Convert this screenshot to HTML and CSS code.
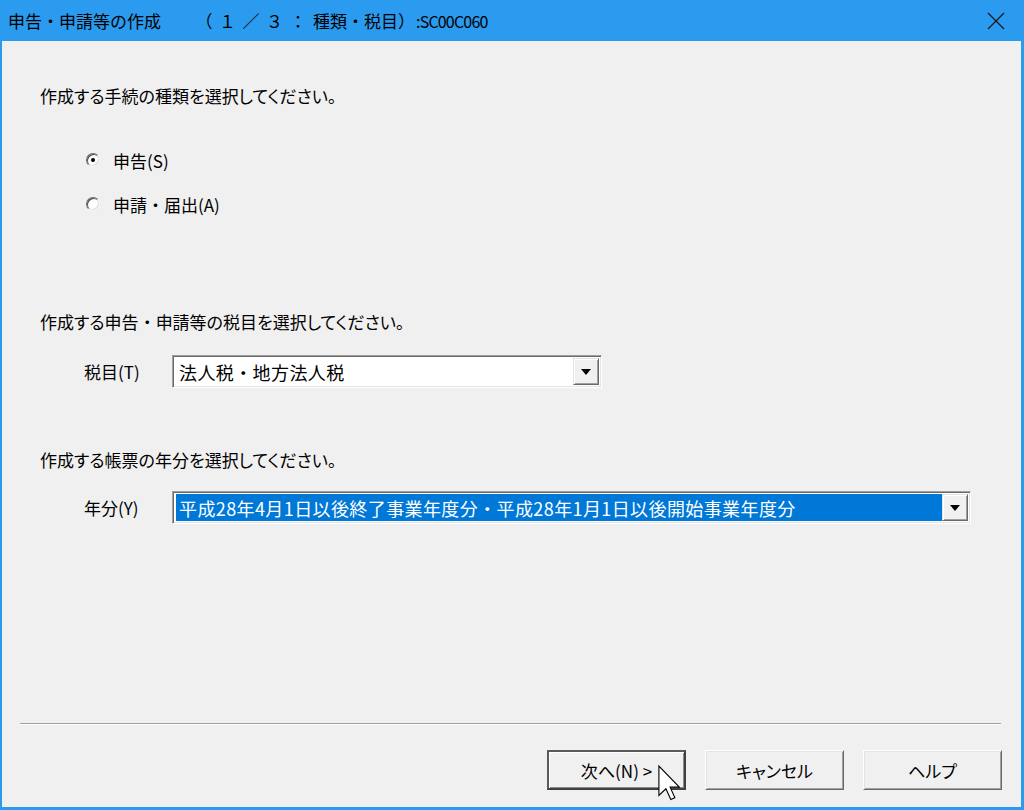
FILE: index.html
```html
<!DOCTYPE html>
<html lang="ja">
<head>
<meta charset="utf-8">
<title>申告・申請等の作成</title>
<link rel="stylesheet" href="styles.css">
</head>
<body>
<div class="window">
  <div class="titlebar">
    <span class="title">申告・申請等の作成　　<span class="title-step">（１／３：</span>種類・税目）<span class="title-id">:SC00C060</span></span>
    <span class="close">
      <svg width="18" height="18" viewBox="0 0 18 18"><path d="M1 1 L17 17 M17 1 L1 17" stroke="#1a1a1a" stroke-width="1.3" fill="none"/></svg>
    </span>
  </div>
  <div class="client">
    <div class="main">
      <p class="prompt p1">作成する手続の種類を選択してください。</p>
      <div class="radios">
        <div class="radio"><span class="dot checked"></span><span>申告(S)</span></div>
        <div class="radio"><span class="dot"></span><span>申請<span class="nk">・</span>届出(A)</span></div>
      </div>
      <p class="prompt p2">作成する申告<span class="nk">・</span>申請等の税目を選択してください。</p>
      <div class="field f1">
        <span class="flabel">税目(T)</span>
        <div class="combo combo-short">
          <span class="value">法人税・地方法人税</span>
          <span class="dd"><span class="tri"></span></span>
        </div>
      </div>
      <p class="prompt p3">作成する帳票の年分を選択してください。</p>
      <div class="field f2">
        <span class="flabel">年分(Y)</span>
        <div class="combo combo-long">
          <span class="value selected">平成28年4月1日以後終了事業年度分・平成28年1月1日以後開始事業年度分</span>
          <span class="dd"><span class="tri"></span></span>
        </div>
      </div>
    </div>
    <div class="footer">
      <div class="sep"></div>
      <div class="buttons">
        <button class="btn default">次へ(N) &gt;</button>
        <button class="btn">キャンセル</button>
        <button class="btn">ヘルプ</button>
      </div>
    </div>
  </div>
  <svg class="cursor" width="22" height="36" viewBox="0 0 12 19.5">
    <path d="M0.5 0.5 L0.5 16.5 L4.3 12.9 L7 18.8 L9.2 17.8 L6.6 12 L11.6 12 Z" fill="#fff" stroke="#000" stroke-width="0.6" stroke-linejoin="miter"/>
  </svg>
</div>
</body>
</html>
```

FILE: styles.css
```css
html, body {
  margin: 0;
  padding: 0;
}
body {
  width: 1024px;
  height: 810px;
  overflow: hidden;
  background: #2b9bef;
  font-family: "Noto Sans CJK JP", "Noto Sans", sans-serif;
  color: #000;
}
.window {
  position: relative;
  height: 810px;
  display: flex;
  flex-direction: column;
}
.titlebar {
  height: 41px;
  flex: none;
  display: flex;
  align-items: center;
  justify-content: space-between;
  padding-left: 8px;
}
.title {
  font-size: 17px;
  line-height: 20px;
  color: #000;
  white-space: nowrap;
}
.title-step {
  letter-spacing: 6.5px;
  margin-left: 9px;
}
.title-id {
  font-size: 16px;
  letter-spacing: -0.8px;
  margin-left: 1px;
}
.close {
  width: 56px;
  height: 41px;
  display: flex;
  align-items: center;
  justify-content: center;
}
.client {
  flex: 1;
  background: #f0f0f0;
  margin: 0 3px 3px 2px;
  display: flex;
  flex-direction: column;
}
.main {
  padding-left: 38px;
  display: flex;
  flex-direction: column;
}
.prompt {
  margin: 0;
  font-size: 17px;
  line-height: 20px;
  font-feature-settings: "palt";
}
.nk {
  font-feature-settings: normal;
}
.p1 { margin-top: 45px; }
.p2 { margin-top: 98px; }
.p3 { margin-top: 62px; }
.radios {
  margin-top: 44px;
  margin-left: 46px;
  display: flex;
  flex-direction: column;
  gap: 24px;
}
.radio {
  display: flex;
  align-items: center;
  height: 20px;
  font-size: 17px;
  font-feature-settings: "palt";
}
.dot {
  width: 14px;
  height: 14px;
  box-sizing: border-box;
  border-radius: 50%;
  border: 1px solid;
  border-color: #6a6a6a #f4f4f4 #f4f4f4 #6a6a6a;
  box-shadow: inset 1px 1px 0 #4a4a4a, inset -1px -1px 0 #dcdcdc;
  background: #fff;
  margin-right: 13px;
  display: flex;
  align-items: center;
  justify-content: center;
}
.dot.checked::after {
  content: "";
  width: 4px;
  height: 4px;
  border-radius: 50%;
  background: #000;
}
.field {
  display: flex;
  align-items: center;
  height: 33px;
  font-size: 17px;
  font-feature-settings: "palt";
}
.f1 { margin-top: 23px; }
.f2 { margin-top: 21px; }
.flabel {
  margin-left: 44px;
  width: 88px;
}
.combo {
  height: 33px;
  box-sizing: border-box;
  border: 1px solid;
  border-color: #a0a0a0 #ffffff #ffffff #a0a0a0;
  box-shadow: inset 1px 1px 0 #696969, inset -1px -1px 0 #e3e3e3;
  background: #fff;
  display: flex;
  align-items: stretch;
  padding: 2px 2px 2px 3px;
}
.combo-short { width: 430px; }
.combo-long { width: 799px; }
.value {
  flex: 1;
  display: flex;
  align-items: center;
  padding-left: 3px;
  white-space: nowrap;
  font-size: 18px;
  letter-spacing: 0.4px;
  font-feature-settings: normal;
}
.value.selected {
  background: #0078d7;
  color: #fff;
}
.dd {
  width: 26px;
  box-sizing: border-box;
  background: #f0f0f0;
  border: 1px solid;
  border-color: #e3e3e3 #696969 #696969 #e3e3e3;
  box-shadow: inset 1px 1px 0 #fff, inset -1px -1px 0 #a0a0a0;
  display: flex;
  align-items: center;
  justify-content: center;
}
.tri {
  width: 0;
  height: 0;
  border-left: 5px solid transparent;
  border-right: 5px solid transparent;
  border-top: 6px solid #000;
  margin-top: 1px;
}
.footer {
  margin-top: auto;
  display: flex;
  flex-direction: column;
}
.sep {
  margin: 0 20px 0 18px;
  border-top: 1px solid #a0a0a0;
  border-bottom: 1px solid #ffffff;
}
.buttons {
  margin-top: 25px;
  padding: 0 19px 17px 0;
  display: flex;
  justify-content: flex-end;
  gap: 19px;
}
.btn {
  width: 139px;
  height: 40px;
  box-sizing: border-box;
  font-family: "Noto Sans CJK JP", "Noto Sans", sans-serif;
  font-size: 17px;
  font-feature-settings: "palt";
  color: #000;
  background: #f0f0f0;
  border: 1px solid;
  border-color: #ffffff #696969 #696969 #ffffff;
  box-shadow: inset 1px 1px 0 #e3e3e3, inset -1px -1px 0 #a0a0a0;
  padding: 0;
}
.btn.default {
  border: 2px solid;
  border-color: #5a5a5a #404040 #404040 #5a5a5a;
  box-shadow: inset 1px 1px 0 #ffffff, inset -1px -1px 0 #8a8a8a;
}
.cursor {
  position: absolute;
  left: 658px;
  top: 765px;
}
```
